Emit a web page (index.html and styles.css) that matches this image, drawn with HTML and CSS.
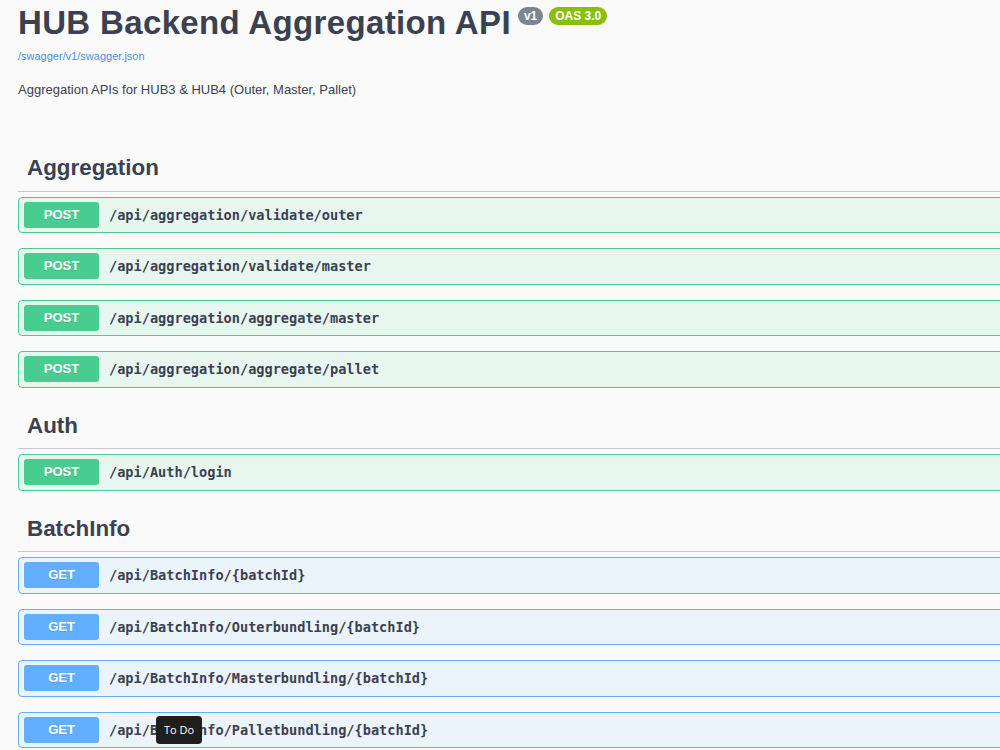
FILE: index.html
```html
<!DOCTYPE html>
<html lang="en">
<head>
  <meta charset="UTF-8">
  <title>HUB Backend Aggregation API</title>
  <link rel="stylesheet" href="styles.css">
</head>
<body>
  <div class="wrapper">
    <div class="info">
      <h2 class="title">
        HUB Backend Aggregation API
        <span class="version">v1</span>
        <span class="version stamp">OAS 3.0</span>
      </h2>
      <a class="spec-link" href="#">/swagger/v1/swagger.json</a>
      <p class="description">Aggregation APIs for HUB3 &amp; HUB4 (Outer, Master, Pallet)</p>
    </div>

    <div class="operations">
      <div class="tag-section">
        <h3 class="tag">Aggregation</h3>
        <div class="opblock post"><span class="method">POST</span><span class="path">/api/aggregation/validate/outer</span></div>
        <div class="opblock post"><span class="method">POST</span><span class="path">/api/aggregation/validate/master</span></div>
        <div class="opblock post"><span class="method">POST</span><span class="path">/api/aggregation/aggregate/master</span></div>
        <div class="opblock post"><span class="method">POST</span><span class="path">/api/aggregation/aggregate/pallet</span></div>
      </div>

      <div class="tag-section">
        <h3 class="tag">Auth</h3>
        <div class="opblock post"><span class="method">POST</span><span class="path">/api/Auth/login</span></div>
      </div>

      <div class="tag-section">
        <h3 class="tag">BatchInfo</h3>
        <div class="opblock get"><span class="method">GET</span><span class="path">/api/BatchInfo/{batchId}</span></div>
        <div class="opblock get"><span class="method">GET</span><span class="path">/api/BatchInfo/Outerbundling/{batchId}</span></div>
        <div class="opblock get"><span class="method">GET</span><span class="path">/api/BatchInfo/Masterbundling/{batchId}</span></div>
        <div class="opblock get">
          <span class="method">GET</span><span class="path">/api/BatchInfo/Palletbundling/{batchId}</span>
          <span class="tooltip">To Do</span>
        </div>
      </div>
    </div>
  </div>
</body>
</html>
```

FILE: styles.css
```css
html, body {
  margin: 0;
  overflow: hidden;
  background-color: #fafafa;
}
body {
  font-family: "Liberation Sans", Arial, sans-serif;
  color: #3b4151;
}
.wrapper {
  width: 1200px;
  padding-left: 18px;
}
.info {
  padding-top: 5px;
}
.title {
  display: flex;
  align-items: flex-start;
  gap: 6px;
  margin: 0;
  font-size: 33px;
  line-height: 36px;
  letter-spacing: 0.35px;
  font-weight: bold;
  color: #3b4151;
}
.title .version {
  margin-top: 2px;
  padding: 0 6px;
  height: 18px;
  line-height: 18px;
  border-radius: 10px;
  background-color: #7d8492;
  color: white;
  font-size: 12px;
  letter-spacing: 0;
  font-weight: bold;
}
.title .version:first-of-type {
  margin-left: 1px;
}
.title .stamp {
  background-color: #89bf04;
}
.spec-link {
  display: block;
  margin-top: 8px;
  font-size: 11px;
  line-height: 14px;
  color: #4990e2;
  text-decoration: none;
}
.description {
  margin: 19px 0 0;
  font-size: 13px;
  line-height: 15px;
}
.operations {
  margin-top: 48px;
}
.tag {
  margin: 0 0 5px;
  padding: 10px 0 9.5px 9px;
  font-size: 22.4px;
  line-height: 26px;
  font-weight: bold;
  border-bottom: 1px solid #c5c7cc;
}
.opblock {
  position: relative;
  display: flex;
  align-items: center;
  height: 36.5px;
  box-sizing: border-box;
  margin-bottom: 15px;
  padding: 0 5px;
  border: 1px solid;
  border-radius: 4px;
}
.opblock.post {
  background-color: #e8f6f0;
  border-color: #49cc90;
}
.opblock.get {
  background-color: #ebf3fb;
  border-color: #61affe;
}
.method {
  width: 75px;
  height: 26px;
  line-height: 26px;
  text-align: center;
  border-radius: 3px;
  color: white;
  font-size: 13px;
  font-weight: bold;
  text-shadow: 0 1px 0 rgba(0, 0, 0, 0.1);
}
.post .method {
  background-color: #49cc90;
}
.get .method {
  background-color: #61affe;
}
.path {
  padding-left: 10px;
  font-family: "DejaVu Sans Mono", "Liberation Mono", monospace;
  font-size: 13.6px;
  font-weight: bold;
  color: #3b4151;
}
.tooltip {
  position: absolute;
  left: 137px;
  top: 3px;
  padding: 0 8px;
  height: 28px;
  line-height: 28px;
  border-radius: 4px;
  background-color: #1f1f1f;
  color: white;
  font-family: "Open Sans", sans-serif;
  font-size: 11px;
}
```
